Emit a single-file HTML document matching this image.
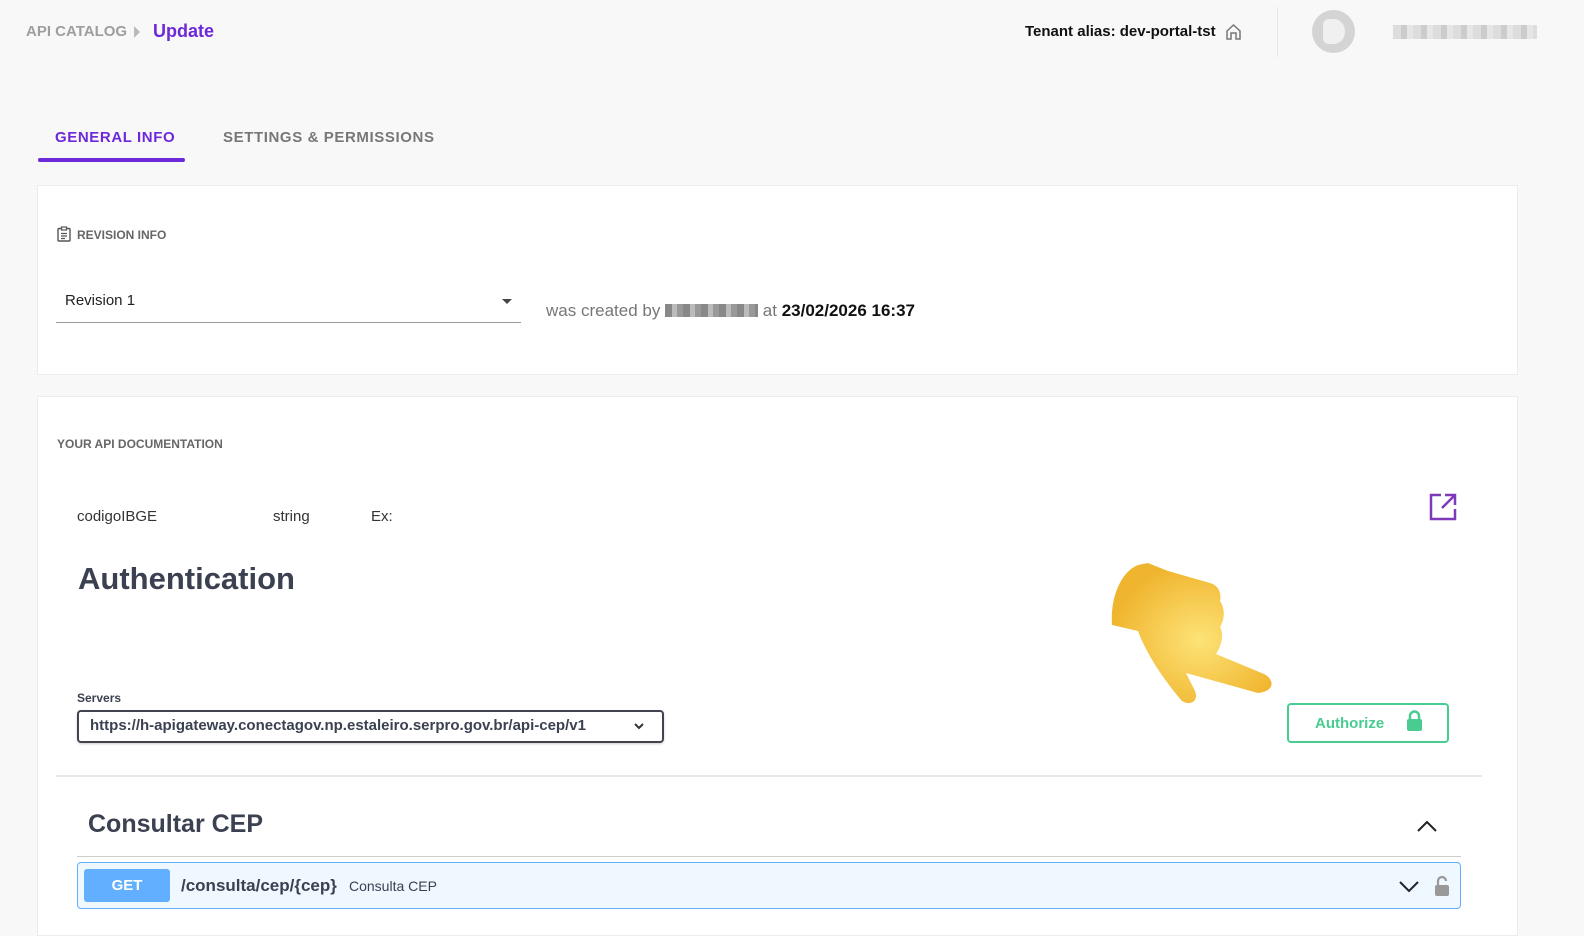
<!DOCTYPE html>
<html><head><meta charset="utf-8"><style>
*{box-sizing:border-box;margin:0;padding:0}
body{width:1584px;height:927px;overflow:hidden;background:#f8f8f8;font-family:"Liberation Sans",sans-serif;position:relative}
.a{position:absolute}
.card{position:absolute;left:37px;width:1481px;background:#fff;border:1px solid #ececec}
</style></head><body>
<div class="a" style="left:26px;top:23px;font-size:15px;color:#9e9e9e;font-weight:bold">API CATALOG</div>
<div class="a" style="left:134px;top:26px;width:0;height:0;border-left:6px solid #bbb;border-top:6px solid transparent;border-bottom:6px solid transparent"></div>
<div class="a" style="left:153px;top:21px;font-size:18px;color:#6d28d9;font-weight:bold">Update</div>
<div class="a" style="left:1025px;top:23px;font-size:15px;color:#111;font-weight:bold">Tenant alias: dev-portal-tst</div>
<svg class="a" style="left:1225px;top:23px" width="17" height="18" viewBox="0 0 17 18"><path d="M2 8L8.5 2 15 8V16H11V10H6V16H2Z" fill="none" stroke="#777" stroke-width="1.5"/></svg>
<div class="a" style="left:1277px;top:7px;width:1px;height:50px;background:#e6e6e6"></div>
<div class="a" style="left:1312px;top:10px;width:43px;height:43px;border-radius:50%;background:#d4d4d4"></div>
<div class="a" style="left:1323px;top:19px;width:22px;height:25px;border-radius:6px 50% 50% 6px;background:#f0f0f0"></div>
<div class="a" style="left:1393px;top:25px;width:144px;height:14px;background:repeating-linear-gradient(90deg,#ddd 0 8px,#ccc 8px 14px,#e6e6e6 14px 20px)"></div>

<div class="a" style="left:55px;top:129px;font-size:15px;color:#6d28d9;font-weight:bold;letter-spacing:.6px">GENERAL INFO</div>
<div class="a" style="left:38px;top:158px;width:147px;height:4px;background:#6d28d9;border-radius:2px"></div>
<div class="a" style="left:223px;top:129px;font-size:15px;color:#777;font-weight:bold;letter-spacing:.6px">SETTINGS &amp; PERMISSIONS</div>

<div class="card" style="top:185px;height:190px">
<svg class="a" style="left:19px;top:40px" width="14" height="16" viewBox="0 0 14 16"><rect x="1" y="2.5" width="12" height="12.5" rx="1" fill="none" stroke="#555" stroke-width="1.4"/><rect x="4.5" y="1" width="5" height="3" fill="#fff" stroke="#555" stroke-width="1.2"/><path d="M4 7.5H10M4 10H10M4 12.5H8" stroke="#555" stroke-width="1.2"/></svg>
<div class="a" style="left:39px;top:42px;font-size:12px;color:#666;font-weight:bold">REVISION INFO</div>
<div class="a" style="left:27px;top:106px;font-size:15px;color:#222">Revision 1</div>
<div class="a" style="left:464px;top:113px;border-top:5px solid #444;border-left:5px solid transparent;border-right:5px solid transparent"></div>
<div class="a" style="left:18px;top:136px;width:465px;height:1px;background:#999"></div>
<div class="a" style="left:508px;top:115px;font-size:17px;color:#777">was created by <span style="display:inline-block;width:93px;height:13px;background:repeating-linear-gradient(90deg,#888 0 7px,#bbb 7px 12px,#999 12px 18px);vertical-align:-1px"></span> at <b style="color:#111">23/02/2026 16:37</b></div>
</div>

<div class="card" style="top:396px;height:540px">
<div class="a" style="left:19px;top:40px;font-size:12px;color:#666;font-weight:bold">YOUR API DOCUMENTATION</div>
<div class="a" style="left:39px;top:111px;font-size:15px;color:#333">codigoIBGE</div>
<div class="a" style="left:235px;top:111px;font-size:15px;color:#333">string</div>
<div class="a" style="left:333px;top:111px;font-size:15px;color:#333">Ex:</div>
<svg class="a" style="left:1391px;top:96px" width="28" height="28" viewBox="0 0 28 28"><path d="M12 2H2V26H26V16M16 2H26V12M26 2L13 15" fill="none" stroke="#7e3ab8" stroke-width="2.5"/></svg>
<div class="a" style="left:40px;top:164px;font-size:31px;color:#3b4151;font-weight:bold">Authentication</div>
<svg class="a" style="left:1070px;top:164px" width="170" height="150" viewBox="0 0 170 150"><defs><radialGradient id="g" cx=".55" cy=".55" r=".55"><stop offset="0" stop-color="#fde377"/><stop offset="1" stop-color="#f0b52f"/></radialGradient></defs><path d="M30 4C14 10 2 35 4 64L30 70C38 92 55 118 74 140C84 146 92 138 86 128L78 112L150 132C168 130 166 118 156 113L108 93C114 84 116 72 112 66C118 56 116 46 112 40C114 32 110 24 102 22L60 10L40 2Z" fill="url(#g)"/></svg>
<div class="a" style="left:1249px;top:306px;width:162px;height:40px;border:2px solid #49cc90;border-radius:4px"></div>
<div class="a" style="left:1277px;top:318px;font-size:15px;color:#49cc90;font-weight:bold">Authorize</div>
<svg class="a" style="left:1368px;top:313px" width="18" height="22" viewBox="0 0 18 22"><path d="M4 10V6A4.5 4.5 0 0 1 13 6V10" fill="none" stroke="#49cc90" stroke-width="2.5"/><rect x="1" y="9" width="15" height="12" rx="2" fill="#49cc90"/></svg>
<div class="a" style="left:39px;top:294px;font-size:12px;color:#3b4151;font-weight:bold">Servers</div>
<div class="a" style="left:39px;top:313px;width:587px;height:33px;border:2px solid #41444e;border-radius:4px;box-shadow:0 1px 2px rgba(0,0,0,.2)"></div>
<div class="a" style="left:52px;top:320px;font-size:15px;color:#3b4151;font-weight:bold">https://h-apigateway.conectagov.np.estaleiro.serpro.gov.br/api-cep/v1</div>
<svg class="a" style="left:595px;top:324px" width="12" height="10" viewBox="0 0 12 10"><path d="M2 3L6 7 10 3" fill="none" stroke="#333" stroke-width="2"/></svg>
<div class="a" style="left:18px;top:378px;width:1426px;height:2px;background:#e8e8e8"></div>
<div class="a" style="left:50px;top:413px;font-size:25px;color:#3b4151;font-weight:bold">Consultar CEP</div>
<svg class="a" style="left:1378px;top:422px" width="22" height="14" viewBox="0 0 22 14"><path d="M2 12L11 3 20 12" fill="none" stroke="#222" stroke-width="2"/></svg>
<div class="a" style="left:39px;top:459px;width:1384px;height:1px;background:#ccc"></div>
<div class="a" style="left:39px;top:465px;width:1384px;height:47px;background:#eff7ff;border:1px solid #61affe;border-radius:4px"></div>
<div class="a" style="left:46px;top:472px;width:86px;height:33px;background:#61affe;border-radius:3px;color:#fff;font-weight:bold;font-size:15px;text-align:center;line-height:33px">GET</div>
<div class="a" style="left:143px;top:479px;font-size:17px;color:#3b4151;font-weight:bold">/consulta/cep/{cep}</div>
<div class="a" style="left:311px;top:481px;font-size:14px;color:#3b4151">Consulta CEP</div>
<svg class="a" style="left:1360px;top:482px" width="22" height="14" viewBox="0 0 22 14"><path d="M2 3L11 12 20 3" fill="none" stroke="#222" stroke-width="2"/></svg>
<svg class="a" style="left:1396px;top:478px" width="16" height="22" viewBox="0 0 16 22"><path d="M4 10V6A4 4 0 0 1 12 6" fill="none" stroke="#999" stroke-width="2.2"/><rect x="1" y="10" width="14" height="11" rx="2" fill="#999"/></svg>
</div>
</body></html>
